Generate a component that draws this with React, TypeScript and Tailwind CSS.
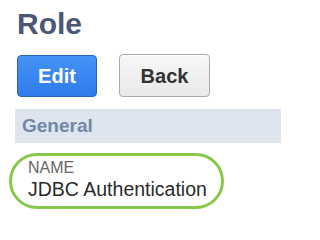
export default function App() {
  return (
    <div className="w-[281px] h-[209px] overflow-hidden bg-white font-['Liberation_Sans',Arial,sans-serif]">
      {/* Title */}
      <h1 className="ml-[17px] pt-[9px] text-[30px] leading-none font-bold text-[#4a5873]">Role</h1>

      {/* Actions */}
      <div className="mt-[15px] ml-[17px] flex items-center gap-[22px]">
        <button className="w-[80px] h-[42px] rounded-[4px] border border-[#2a63bd] bg-gradient-to-b from-[#4593f7] to-[#2f7bec] text-white text-[20px] font-bold leading-none">
          Edit
        </button>
        <button className="w-[91px] h-[43px] rounded-[4px] border border-[#a9a9a9] bg-gradient-to-b from-[#f7f7f7] to-[#e9e9e9] text-[#333] text-[20px] font-bold leading-none shadow-[inset_0_1px_0_#fff]">
          Back
        </button>
      </div>

      {/* Section header */}
      <div className="mt-[12px] ml-[15px] h-[34px] bg-[#dee5ef] flex items-center pl-[7px]">
        <span className="text-[19px] font-bold text-[#7287a6]">General</span>
      </div>

      {/* Highlighted field */}
      <div className="mt-[10px] ml-[9px] w-[215px] h-[56px] rounded-full border-[3px] border-[#86c84a] pl-[16px] pt-[4px]">
        <div className="text-[16px] leading-[16px] text-[#666]">NAME</div>
        <div className="mt-[4px] text-[19.5px] leading-[19px] text-[#2a2a2a]">JDBC Authentication</div>
      </div>
    </div>
  );
}
